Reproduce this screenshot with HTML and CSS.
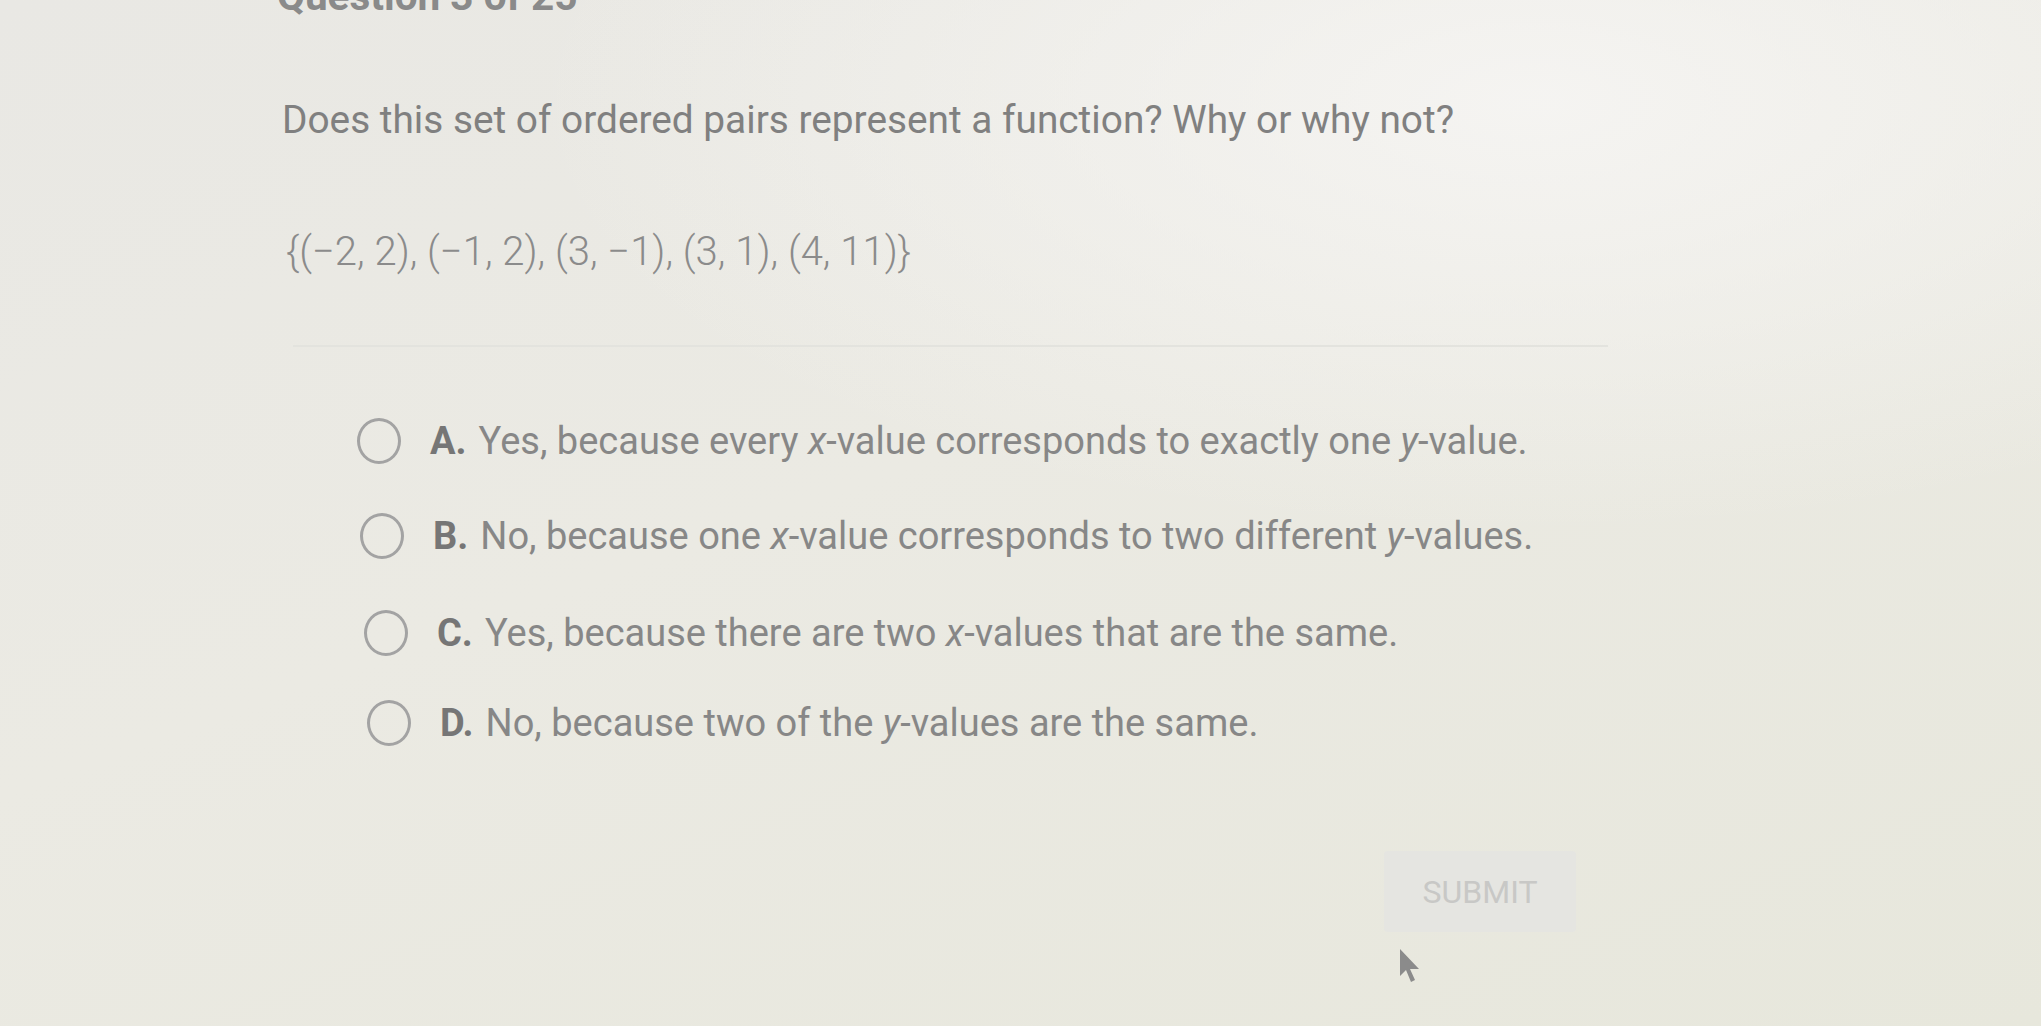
FILE: index.html
```html
<!DOCTYPE html>
<html lang="en">
<head>
<meta charset="utf-8">
<title>Question 3 of 25</title>
<link rel="stylesheet" href="styles.css">
</head>
<body>
<main class="page">
  <h2 class="qnum">Question 3 of 25</h2>
  <p class="prompt">Does this set of ordered pairs represent a function? Why or why not?</p>
  <p class="set">{(−2, 2), (−1, 2), (3, −1), (3, 1), (4, 11)}</p>
  <hr class="sep">
  <ul class="options">
    <li class="option option-a"><span class="radio"></span><span class="letter">A.</span><span class="text">Yes, because every <i>x</i>-value corresponds to exactly one <i>y</i>-value.</span></li>
    <li class="option option-b"><span class="radio"></span><span class="letter">B.</span><span class="text">No, because one <i>x</i>-value corresponds to two different <i>y</i>-values.</span></li>
    <li class="option option-c"><span class="radio"></span><span class="letter">C.</span><span class="text">Yes, because there are two <i>x</i>-values that are the same.</span></li>
    <li class="option option-d"><span class="radio"></span><span class="letter">D.</span><span class="text">No, because two of the <i>y</i>-values are the same.</span></li>
  </ul>
  <div class="actions">
    <button class="submit" type="button" disabled>SUBMIT</button>
  </div>
</main>
<svg class="cursor" width="22" height="40" viewBox="0 0 22 40" aria-hidden="true">
  <path d="M1 1 L1 28 L7 22 L12 34 L16 32 L11 21 L20 21 Z" fill="#8b8b8b"/>
</svg>
</body>
</html>
```

FILE: styles.css
```css
html, body {
  margin: 0;
  padding: 0;
  height: 100%;
}

body {
  overflow: hidden;
  font-family: Roboto, "Liberation Sans", Arial, sans-serif;
  color: #8a8a8a;
  background:
    radial-gradient(ellipse 70% 60% at 75% 10%, rgba(246, 245, 243, 0.9), rgba(246, 245, 243, 0) 70%),
    linear-gradient(160deg, #e9e8e4 0%, #ebeae3 45%, #e7e7dc 100%);
  position: relative;
}

.page {
  width: 1326px;
  padding-left: 282px;
  display: flex;
  flex-direction: column;
}

.qnum {
  margin: -24px 0 0 -5px;
  font-size: 40.5px;
  line-height: 40px;
  font-weight: 700;
  color: #8a8a8a;
}

.prompt {
  margin: 80px 0 0 0;
  font-size: 38.8px;
  line-height: 48px;
  color: #808080;
}

.set {
  margin: 84px 0 0 4px;
  font-size: 40px;
  line-height: 48px;
  color: #8b8b8b;
  font-weight: 300;
}

.sep {
  margin: 69px 0 0 11px;
  width: 1315px;
  height: 0;
  border: 0;
  border-top: 2px solid #e3e3de;
}

.options {
  list-style: none;
  margin: 70px 0 0 0;
  padding: 0 0 0 75px;
  display: flex;
  flex-direction: column;
  gap: 47px;
}

.option {
  display: flex;
  align-items: center;
  height: 48px;
  font-size: 38px;
  line-height: 48px;
}

.option-b { padding-left: 3px; }
.option-c { padding-left: 7px; margin-top: 2px; }
.option-d { padding-left: 10px; margin-top: -5px; }

.radio {
  flex: none;
  width: 38px;
  height: 40px;
  border: 3px solid #a3a3a3;
  border-radius: 50%;
  margin-right: 29px;
}

.letter {
  font-weight: 700;
  color: #767676;
  margin-right: 12px;
}

.text {
  color: #878787;
}

.text i {
  font-style: italic;
}

.actions {
  display: flex;
  justify-content: flex-end;
  width: 1294px;
  margin-top: 104px;
}

.submit {
  width: 192px;
  height: 81px;
  border: 0;
  border-radius: 4px;
  background: #e5e5e1;
  color: #c8c8c6;
  font-family: Roboto, "Liberation Sans", Arial, sans-serif;
  font-size: 32px;
  padding: 0;
}

.cursor {
  position: absolute;
  left: 1399px;
  top: 948px;
}
```
